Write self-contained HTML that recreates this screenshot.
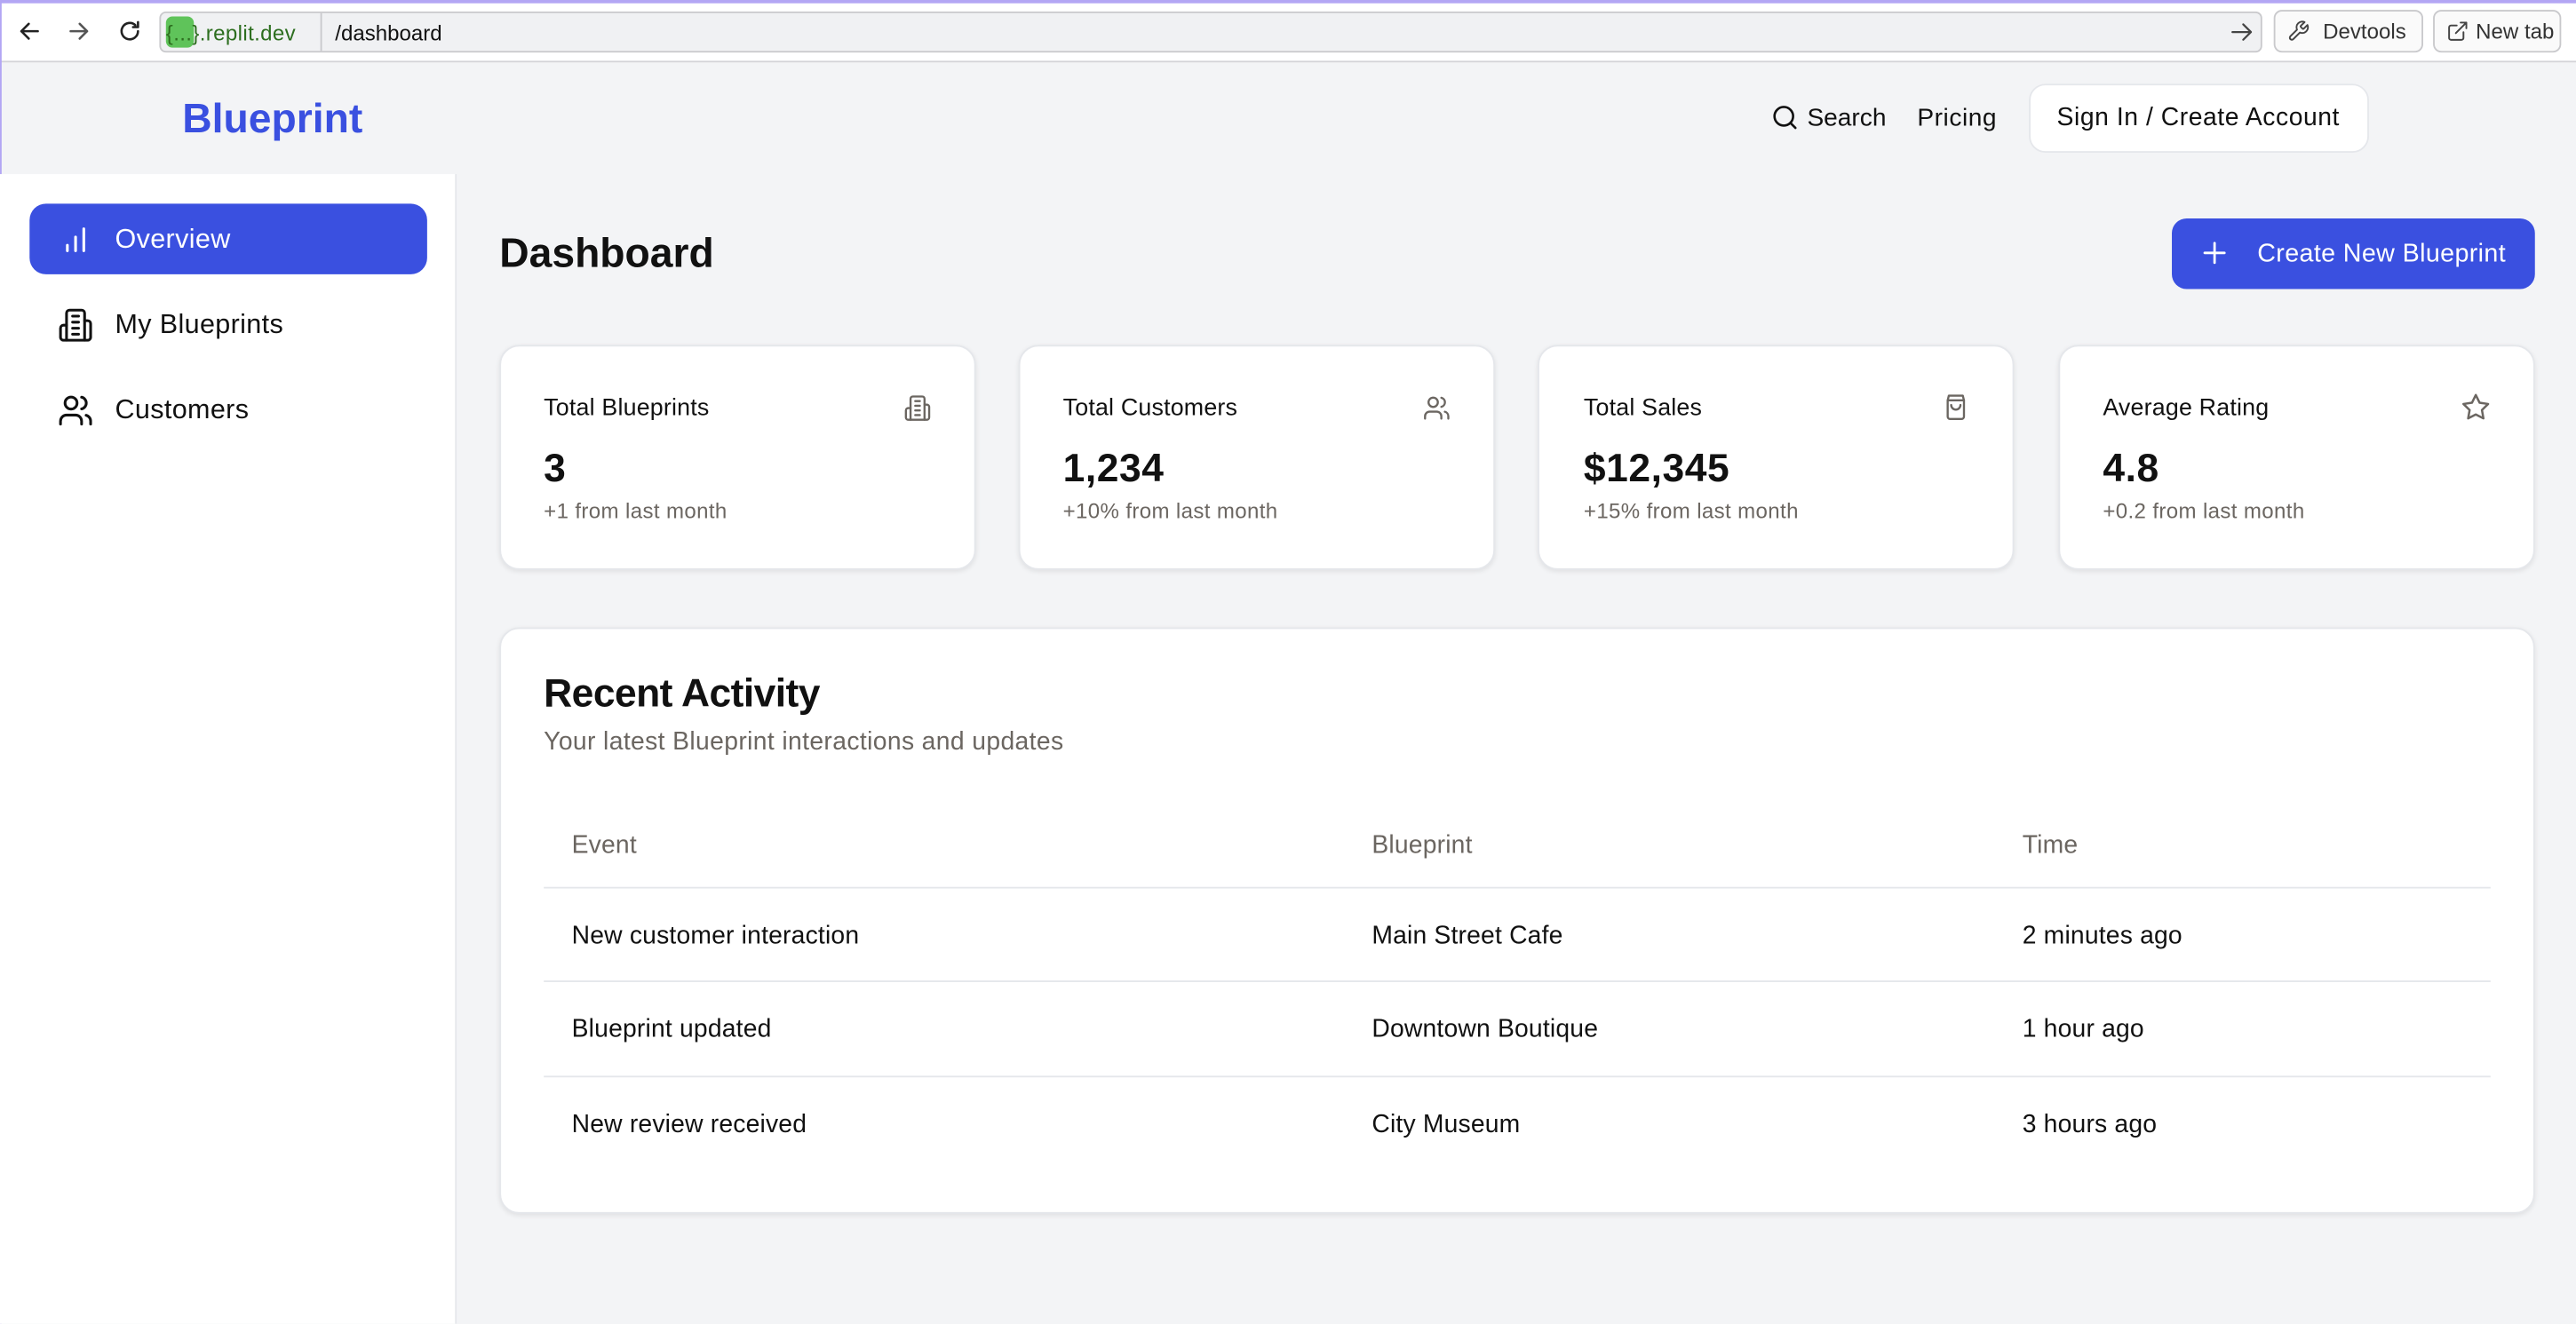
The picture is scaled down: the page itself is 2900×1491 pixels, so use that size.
<!DOCTYPE html>
<html><head><meta charset="utf-8"><style>
*{box-sizing:border-box;margin:0;padding:0}
html,body{width:2900px;height:1490px;overflow:hidden;background:#f3f4f6}
#w{position:absolute;left:0;top:0;width:1568px;height:806px;transform:scale(1.849490);transform-origin:0 0;font-family:"Liberation Sans",sans-serif;color:#111;background:#f3f4f6}
.a{position:absolute}
.t{position:absolute;white-space:nowrap;line-height:1;transform:translateY(-50%)}
svg{position:absolute;fill:none;stroke-linecap:round;stroke-linejoin:round}
.card{position:absolute;background:#fff;border:1px solid #e5e7eb;border-radius:12px;box-shadow:0 1px 3px rgba(0,0,0,.08)}
.r{font-size:15.3px;letter-spacing:.1px}
</style></head><body><div id="w">
<div class="a" style="left:0;top:0;width:1568px;height:38px;background:#fff;border-bottom:1px solid #d4d4d8"></div>
<div class="a" style="left:0;top:0;width:1568px;height:2px;background:#b3a6f4"></div>
<div class="a" style="left:0;top:0;width:1px;height:806px;background:#b3a6f4"></div>
<svg style="left:10px;top:11px" width="16" height="16" viewBox="0 0 16 16" stroke="#222" stroke-width="1.4"><path d="M13 8H3M7.5 3.5L3 8l4.5 4.5"/></svg>
<svg style="left:40px;top:11px" width="16" height="16" viewBox="0 0 16 16" stroke="#555" stroke-width="1.4"><path d="M3 8h10M8.5 3.5L13 8l-4.5 4.5"/></svg>
<svg style="left:71px;top:11px" width="16" height="16" viewBox="0 0 16 16" stroke="#222" stroke-width="1.4"><path d="M13 8a5 5 0 1 1-1.6-3.7M13 2.5v3h-3"/></svg>
<div class="a" style="left:97px;top:7px;width:1280px;height:25px;background:#f0f1f3;border:1px solid #c9c9cc;border-radius:4px"></div>
<div class="a" style="left:101px;top:10px;width:17px;height:19px;background:#5fc35a;border-radius:4px"></div>
<div class="t" style="left:101px;top:20px;font-size:13px;color:#2d6e1f;letter-spacing:.2px">{...}.replit.dev</div>
<div class="a" style="left:195px;top:8px;width:1px;height:23px;background:#c9c9cc"></div>
<div class="t" style="left:204px;top:20px;font-size:13px;color:#111">/dashboard</div>
<svg style="left:1357px;top:12px" width="15" height="15" viewBox="0 0 16 16" stroke="#444" stroke-width="1.3"><path d="M2 8h12M9 3l5 5-5 5"/></svg>
<div class="a" style="left:1384px;top:6px;width:91px;height:26px;border:1px solid #c9c9cc;border-radius:5px;background:#fafafa"></div>
<svg style="left:1392px;top:12px" width="14" height="14" viewBox="0 0 24 24" stroke="#444" stroke-width="1.8"><path d="M14.7 6.3a1 1 0 0 0 0 1.4l1.6 1.6a1 1 0 0 0 1.4 0l3.8-3.8a6 6 0 0 1-7.9 7.9l-6.9 6.9a2.1 2.1 0 0 1-3-3l6.9-6.9a6 6 0 0 1 7.9-7.9z"/></svg>
<div class="t" style="left:1414px;top:19px;font-size:13px;color:#333">Devtools</div>
<div class="a" style="left:1481px;top:6px;width:78px;height:26px;border:1px solid #c9c9cc;border-radius:5px;background:#fafafa"></div>
<svg style="left:1489px;top:12px" width="14" height="14" viewBox="0 0 24 24" stroke="#444" stroke-width="1.8"><path d="M15 3h6v6M10 14L21 3M18 13v6a2 2 0 0 1-2 2H5a2 2 0 0 1-2-2V8a2 2 0 0 1 2-2h6"/></svg>
<div class="t" style="left:1507px;top:19px;font-size:13px;color:#333">New tab</div>

<div class="t" style="left:111px;top:73px;font-size:25px;font-weight:bold;color:#3a50e0">Blueprint</div>
<svg style="left:1078px;top:63px" width="17" height="17" viewBox="0 0 24 24" stroke="#111" stroke-width="2"><circle cx="11" cy="11" r="8"/><path d="M21 21l-4.3-4.3"/></svg>
<div class="t" style="left:1100px;top:72px;font-size:15.2px">Search</div>
<div class="t" style="left:1167px;top:72px;font-size:15.2px;letter-spacing:.3px">Pricing</div>
<div class="a" style="left:1235px;top:51px;width:207px;height:42px;background:#fff;border:1px solid #e5e7eb;border-radius:10px"></div>
<div class="t" style="left:1252px;top:72px;font-size:15.3px;letter-spacing:.3px">Sign In / Create Account</div>

<div class="a" style="left:0;top:106px;width:278px;height:700px;background:#fff;border-right:1px solid #e5e7eb"></div>
<div class="a" style="left:18px;top:124px;width:242px;height:43px;background:#3a50e0;border-radius:10px"></div>
<svg style="left:36px;top:136px" width="20" height="20" viewBox="0 0 24 24" stroke="#fff" stroke-width="2"><path d="M18 20V4M12 20V10M6 20v-4"/></svg>
<div class="t" style="left:70px;top:146px;font-size:16.5px;color:#fff;letter-spacing:.2px">Overview</div>
<svg style="left:35px;top:187px" width="22" height="22" viewBox="0 0 24 24" stroke="#111" stroke-width="1.8"><path d="M6 22V4a2 2 0 0 1 2-2h8a2 2 0 0 1 2 2v18z"/><path d="M6 12H4a2 2 0 0 0-2 2v6a2 2 0 0 0 2 2h2M18 9h2a2 2 0 0 1 2 2v9a2 2 0 0 1-2 2h-2M10 6h4M10 10h4M10 14h4M10 18h4"/></svg>
<div class="t" style="left:70px;top:198px;font-size:16.5px;letter-spacing:.2px">My Blueprints</div>
<svg style="left:35px;top:239px" width="22" height="22" viewBox="0 0 24 24" stroke="#111" stroke-width="1.8"><path d="M16 21v-2a4 4 0 0 0-4-4H6a4 4 0 0 0-4 4v2"/><circle cx="9" cy="7" r="4"/><path d="M22 21v-2a4 4 0 0 0-3-3.9M16 3.1a4 4 0 0 1 0 7.8"/></svg>
<div class="t" style="left:70px;top:250px;font-size:16.5px;letter-spacing:.2px">Customers</div>

<div class="t" style="left:304px;top:155px;font-size:25px;font-weight:bold">Dashboard</div>
<div class="a" style="left:1322px;top:133px;width:221px;height:43px;background:#3a50e0;border-radius:9px"></div>
<svg style="left:1339px;top:145px" width="18" height="18" viewBox="0 0 24 24" stroke="#fff" stroke-width="2"><path d="M12 4v16M4 12h16"/></svg>
<div class="t" style="left:1374px;top:155px;font-size:15.5px;color:#fff;letter-spacing:.2px">Create New Blueprint</div>

<div class="card" style="left:304px;top:210px;width:290px;height:137px"></div>
<div class="card" style="left:620px;top:210px;width:290px;height:137px"></div>
<div class="card" style="left:936px;top:210px;width:290px;height:137px"></div>
<div class="card" style="left:1253px;top:210px;width:290px;height:137px"></div>

<div class="t" style="left:331px;top:249px;font-size:14.5px;letter-spacing:.1px">Total Blueprints</div>
<svg style="left:550px;top:240px" width="17" height="17" viewBox="0 0 24 24" stroke="#6b6661" stroke-width="1.8"><path d="M6 22V4a2 2 0 0 1 2-2h8a2 2 0 0 1 2 2v18z"/><path d="M6 12H4a2 2 0 0 0-2 2v6a2 2 0 0 0 2 2h2M18 9h2a2 2 0 0 1 2 2v9a2 2 0 0 1-2 2h-2M10 6h4M10 10h4M10 14h4M10 18h4"/></svg>
<div class="t" style="left:331px;top:286px;font-size:24px;font-weight:bold">3</div>
<div class="t" style="left:331px;top:311px;font-size:13px;color:#6b6661;letter-spacing:.2px">+1 from last month</div>

<div class="t" style="left:647px;top:249px;font-size:14.5px;letter-spacing:.1px">Total Customers</div>
<svg style="left:866px;top:240px" width="17" height="17" viewBox="0 0 24 24" stroke="#6b6661" stroke-width="1.8"><path d="M16 21v-2a4 4 0 0 0-4-4H6a4 4 0 0 0-4 4v2"/><circle cx="9" cy="7" r="4"/><path d="M22 21v-2a4 4 0 0 0-3-3.9M16 3.1a4 4 0 0 1 0 7.8"/></svg>
<div class="t" style="left:647px;top:286px;font-size:24px;font-weight:bold;letter-spacing:.3px">1,234</div>
<div class="t" style="left:647px;top:311px;font-size:13px;color:#6b6661;letter-spacing:.2px">+10% from last month</div>

<div class="t" style="left:964px;top:249px;font-size:14.5px;letter-spacing:.1px">Total Sales</div>
<svg style="left:1182px;top:239px" width="17" height="18" viewBox="0 0 24 24" stroke="#6b6661" stroke-width="1.8"><path d="M6 2h12l1 4v14a2 2 0 0 1-2 2H7a2 2 0 0 1-2-2V6z"/><path d="M5 6h14M16 10a4 4 0 0 1-8 0"/></svg>
<div class="t" style="left:964px;top:286px;font-size:24px;font-weight:bold;letter-spacing:.3px">$12,345</div>
<div class="t" style="left:964px;top:311px;font-size:13px;color:#6b6661;letter-spacing:.2px">+15% from last month</div>

<div class="t" style="left:1280px;top:249px;font-size:14.5px;letter-spacing:.1px">Average Rating</div>
<svg style="left:1498px;top:239px" width="18" height="18" viewBox="0 0 24 24" stroke="#6b6661" stroke-width="1.8"><path d="M12 2l3.1 6.3 6.9 1-5 4.9 1.2 6.8L12 17.8 5.8 21l1.2-6.8-5-4.9 6.9-1z"/></svg>
<div class="t" style="left:1280px;top:286px;font-size:24px;font-weight:bold;letter-spacing:.3px">4.8</div>
<div class="t" style="left:1280px;top:311px;font-size:13px;color:#6b6661;letter-spacing:.2px">+0.2 from last month</div>

<div class="card" style="left:304px;top:382px;width:1239px;height:357px"></div>
<div class="t" style="left:331px;top:423px;font-size:24px;font-weight:bold;letter-spacing:-.3px">Recent Activity</div>
<div class="t" style="left:331px;top:452px;font-size:15.3px;color:#6b6661;letter-spacing:.2px">Your latest Blueprint interactions and updates</div>
<div class="t r" style="left:348px;top:515px;color:#6b6661">Event</div>
<div class="t r" style="left:835px;top:515px;color:#6b6661">Blueprint</div>
<div class="t r" style="left:1231px;top:515px;color:#6b6661">Time</div>
<div class="a" style="left:331px;top:540px;width:1185px;height:1px;background:#e5e7eb"></div>
<div class="a" style="left:331px;top:597px;width:1185px;height:1px;background:#e5e7eb"></div>
<div class="a" style="left:331px;top:655px;width:1185px;height:1px;background:#e5e7eb"></div>
<div class="t r" style="left:348px;top:570px">New customer interaction</div>
<div class="t r" style="left:835px;top:570px">Main Street Cafe</div>
<div class="t r" style="left:1231px;top:570px">2 minutes ago</div>
<div class="t r" style="left:348px;top:627px">Blueprint updated</div>
<div class="t r" style="left:835px;top:627px">Downtown Boutique</div>
<div class="t r" style="left:1231px;top:627px">1 hour ago</div>
<div class="t r" style="left:348px;top:685px">New review received</div>
<div class="t r" style="left:835px;top:685px">City Museum</div>
<div class="t r" style="left:1231px;top:685px">3 hours ago</div>
</div></body></html>
